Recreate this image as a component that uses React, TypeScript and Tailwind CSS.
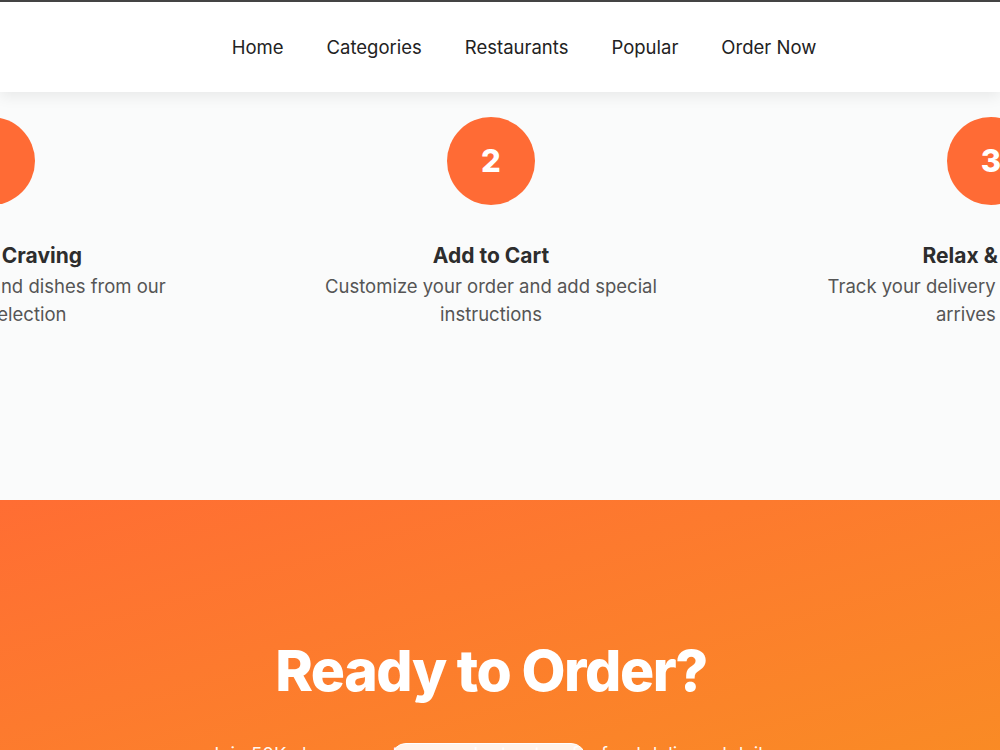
import React from "react";

const steps = [
	{
		num: 1,
		title: "Find Your Craving",
		text: "Browse restaurants and dishes from our curated selection",
	},
	{
		num: 2,
		title: "Add to Cart",
		text: "Customize your order and add special instructions",
	},
	{
		num: 3,
		title: "Relax & Enjoy",
		text: "Track your delivery in real time until it arrives fresh",
	},
];

const navLinks = ["Home", "Categories", "Restaurants", "Popular", "Order Now"];

function Header() {
	return (
		<header className="relative z-10 bg-white h-[90px] flex items-center justify-center shadow-[0_4px_14px_rgba(0,0,0,0.08)]">
			<nav className="flex items-center gap-[43px] pl-[48px] text-[18.5px] text-[#222]">
				{navLinks.map((link) => (
					<a key={link} href="#" className="leading-none">
						{link}
					</a>
				))}
			</nav>
		</header>
	);
}

function Steps() {
	return (
		<section className="bg-[#fafbfb] h-[408px] overflow-hidden pt-[25px]">
			<div className="flex justify-center pr-[18px]">
				{steps.map((step) => (
					<div key={step.num} className="w-[500px] shrink-0 flex flex-col items-center text-center">
						<div className="w-[88px] h-[88px] rounded-full bg-[#ff6b35] flex items-center justify-center text-white text-[31px] font-extrabold">
							{step.num}
						</div>
						<h3 className="mt-[38px] text-[21px] font-bold text-[#2d2d2d] leading-tight">{step.title}</h3>
						<p className="mt-[3px] w-[360px] text-[18.5px] leading-[28px] text-[#555]">{step.text}</p>
					</div>
				))}
			</div>
		</section>
	);
}

function Cta() {
	return (
		<section className="relative bg-gradient-to-br from-[#ff6d33] to-[#f98d23] h-[300px] flex flex-col items-center pt-[142px] pr-[18px]">
			<h2 className="text-[57px] font-extrabold text-white leading-none tracking-tight">Ready to Order?</h2>
			<div className="relative mt-[46px]">
				<p className="text-[18.5px] text-white/95 leading-none">
					Join 50K+ happy customers who trust us for food delivered daily
				</p>
				{/* floating pill over the tagline */}
				<span className="absolute left-[182px] top-[-2px] w-[195px] h-[30px] rounded-full bg-white/90 border border-white" />
			</div>
		</section>
	);
}

export default function App() {
	return (
		<div className="w-[1000px] h-[750px] overflow-hidden font-['Inter',sans-serif] border-t-2 border-[#444]">
			<Header />
			<Steps />
			<Cta />
		</div>
	);
}
